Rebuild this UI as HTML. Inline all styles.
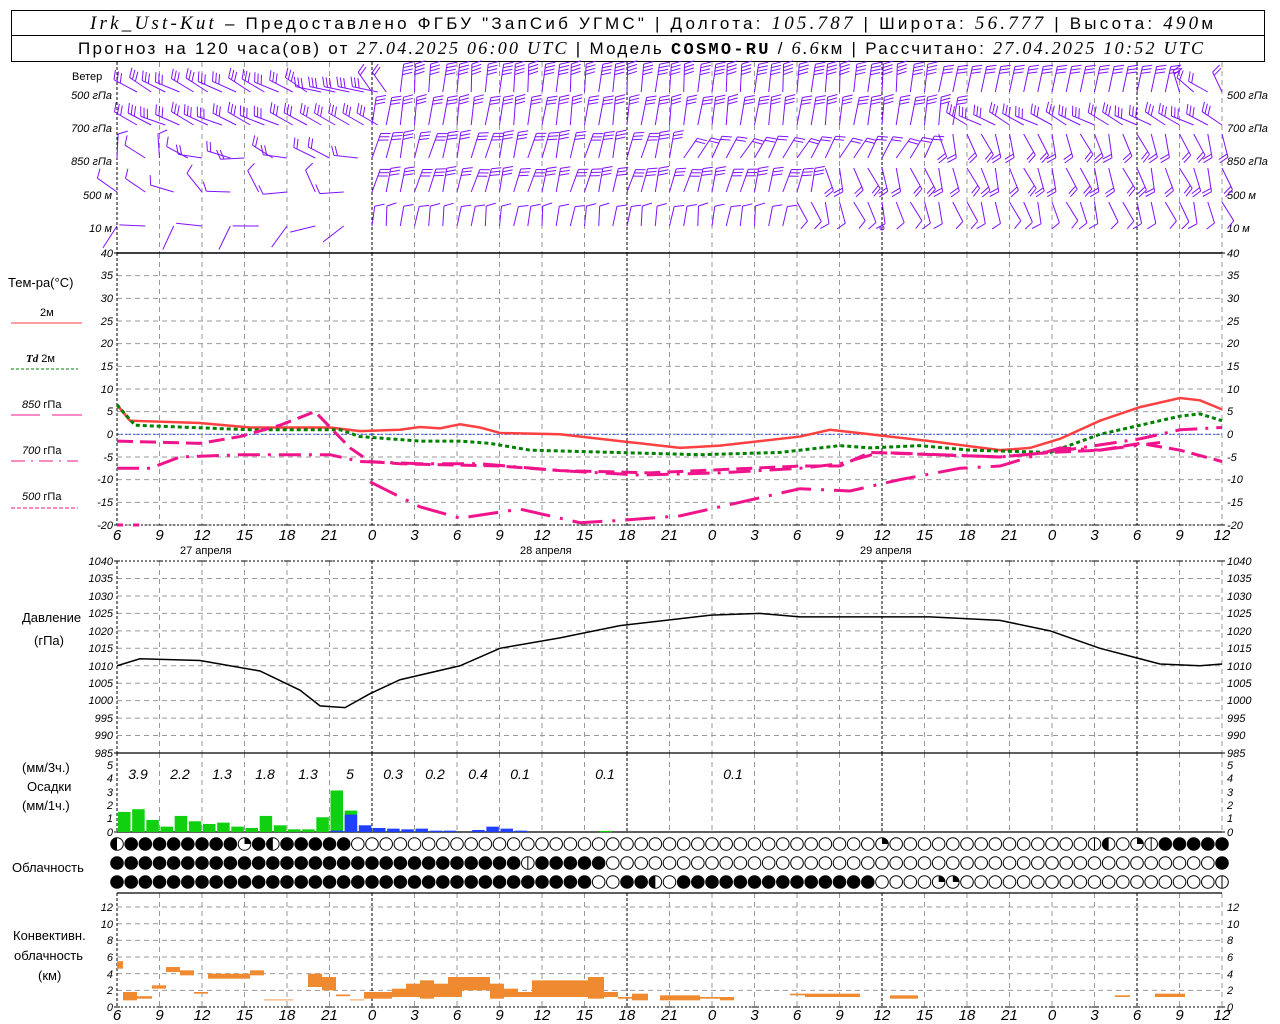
<!DOCTYPE html>
<html><head><meta charset="utf-8">
<style>
html,body{margin:0;padding:0;background:#fff;}
body{width:1280px;height:1024px;overflow:hidden;position:relative;font-family:"Liberation Sans","DejaVu Sans",sans-serif;}
svg{position:absolute;left:0;top:0;}
.t{font-family:"Liberation Sans",sans-serif;font-style:italic;font-size:11px;fill:#000;}
.h{font-family:"Liberation Sans",sans-serif;font-style:italic;font-size:15px;fill:#000;text-anchor:middle;}
.l{font-family:"Liberation Sans",sans-serif;font-size:13px;fill:#000;}
.s{font-family:"Liberation Sans",sans-serif;font-size:11px;fill:#000;}
.hd{font-family:"Liberation Sans",sans-serif;font-size:17px;fill:#000;}
.it{font-family:"Liberation Serif",serif;font-style:italic;}
.pv{font-family:"Liberation Sans",sans-serif;font-style:italic;font-size:14px;fill:#000;text-anchor:middle;}
</style></head><body>
<svg id="g" width="1280" height="1024" xmlns="http://www.w3.org/2000/svg">
<rect x="11.5" y="10.5" width="1253" height="25" fill="none" stroke="#000"/>
<rect x="11.5" y="35.5" width="1253" height="26" fill="none" stroke="#000"/>
<text class="hd" x="90" y="29" textLength="1123" lengthAdjust="spacing"><tspan class="it" font-size="19">Irk_Ust-Kut</tspan> – Предоставлено ФГБУ "ЗапСиб УГМС" | Долгота: <tspan class="it" font-size="19">105.787</tspan> | Широта: <tspan class="it" font-size="19">56.777</tspan> | Высота: <tspan class="it" font-size="19">490</tspan>м</text>
<text class="hd" x="78" y="54" font-size="16" textLength="1125" lengthAdjust="spacing">Прогноз на 120 часа(ов) от <tspan class="it" font-size="18">27.04.2025 06:00 UTC</tspan>  | Модель <tspan font-family="Liberation Mono" font-weight="bold">COSMO-RU</tspan> / <tspan class="it" font-size="18">6.6</tspan>км | Рассчитано: <tspan class="it" font-size="18">27.04.2025 10:52 UTC</tspan></text>

<g class="l">
<text x="72" y="80" class="s" font-size="12">Ветер</text>
<text x="8" y="287">Тем-ра(°C)</text>
<text x="40" y="316" class="s">2м</text>
<text x="26" y="362" class="s"><tspan class="it" font-weight="bold">Td</tspan>  2м</text>
<text x="22" y="408" class="s"><tspan font-style="italic">850</tspan> гПа</text>
<text x="22" y="454" class="s"><tspan font-style="italic">700</tspan> гПа</text>
<text x="22" y="500" class="s"><tspan font-style="italic">500</tspan> гПа</text>
<text x="22" y="622">Давление</text>
<text x="34" y="645">(гПа)</text>
<text x="22" y="772">(мм/3ч.)</text>
<text x="27" y="791">Осадки</text>
<text x="22" y="810">(мм/1ч.)</text>
<text x="12" y="872">Облачность</text>
<text x="13" y="940">Конвективн.</text>
<text x="14" y="960">облачность</text>
<text x="38" y="980">(км)</text>
</g>
<g class="t" text-anchor="end">
<text x="112" y="99">500 гПа</text><text x="112" y="132">700 гПа</text><text x="112" y="165">850 гПа</text><text x="112" y="199">500 м</text><text x="112" y="232">10  м</text>
</g>
<g class="t">
<text x="1227" y="99">500 гПа</text><text x="1227" y="132">700 гПа</text><text x="1227" y="165">850 гПа</text><text x="1227" y="199">500 м</text><text x="1227" y="232">10  м</text>
</g>
<g class="t" font-size="10" text-anchor="end">
<text x="113" y="257">40</text><text x="113" y="279">35</text><text x="113" y="302">30</text><text x="113" y="325">25</text><text x="113" y="347">20</text><text x="113" y="370">15</text><text x="113" y="393">10</text><text x="113" y="415">5</text><text x="113" y="438">0</text><text x="113" y="461">-5</text><text x="113" y="483">-10</text><text x="113" y="506">-15</text><text x="113" y="529">-20</text>
<text x="113" y="565">1040</text><text x="113" y="582">1035</text><text x="113" y="600">1030</text><text x="113" y="617">1025</text><text x="113" y="635">1020</text><text x="113" y="652">1015</text><text x="113" y="670">1010</text><text x="113" y="687">1005</text><text x="113" y="704">1000</text><text x="113" y="722">995</text><text x="113" y="739">990</text><text x="113" y="757">985</text>
<text x="113" y="769">5</text><text x="113" y="782">4</text><text x="113" y="796">3</text><text x="113" y="809">2</text><text x="113" y="822">1</text><text x="113" y="836">0</text>
<text x="113" y="911">12</text><text x="113" y="928">10</text><text x="113" y="944">8</text><text x="113" y="961">6</text><text x="113" y="978">4</text><text x="113" y="994">2</text><text x="113" y="1011">0</text>
</g>
<g class="t" font-size="10">
<text x="1227" y="257">40</text><text x="1227" y="279">35</text><text x="1227" y="302">30</text><text x="1227" y="325">25</text><text x="1227" y="347">20</text><text x="1227" y="370">15</text><text x="1227" y="393">10</text><text x="1227" y="415">5</text><text x="1227" y="438">0</text><text x="1227" y="461">-5</text><text x="1227" y="483">-10</text><text x="1227" y="506">-15</text><text x="1227" y="529">-20</text>
<text x="1227" y="565">1040</text><text x="1227" y="582">1035</text><text x="1227" y="600">1030</text><text x="1227" y="617">1025</text><text x="1227" y="635">1020</text><text x="1227" y="652">1015</text><text x="1227" y="670">1010</text><text x="1227" y="687">1005</text><text x="1227" y="704">1000</text><text x="1227" y="722">995</text><text x="1227" y="739">990</text><text x="1227" y="757">985</text>
<text x="1227" y="769">5</text><text x="1227" y="782">4</text><text x="1227" y="796">3</text><text x="1227" y="809">2</text><text x="1227" y="822">1</text><text x="1227" y="836">0</text>
<text x="1227" y="911">12</text><text x="1227" y="928">10</text><text x="1227" y="944">8</text><text x="1227" y="961">6</text><text x="1227" y="978">4</text><text x="1227" y="994">2</text><text x="1227" y="1011">0</text>
</g>
<g class="h">
<text x="117" y="540">6</text><text x="159.5" y="540">9</text><text x="202" y="540">12</text><text x="244.5" y="540">15</text><text x="287" y="540">18</text><text x="329.5" y="540">21</text><text x="372" y="540">0</text><text x="414.5" y="540">3</text><text x="457" y="540">6</text><text x="499.5" y="540">9</text><text x="542" y="540">12</text><text x="584.5" y="540">15</text><text x="627" y="540">18</text><text x="669.5" y="540">21</text><text x="712" y="540">0</text><text x="754.5" y="540">3</text><text x="797" y="540">6</text><text x="839.5" y="540">9</text><text x="882" y="540">12</text><text x="924.5" y="540">15</text><text x="967" y="540">18</text><text x="1009.5" y="540">21</text><text x="1052" y="540">0</text><text x="1094.5" y="540">3</text><text x="1137" y="540">6</text><text x="1179.5" y="540">9</text><text x="1222" y="540">12</text>
</g>
<g class="h">
<text x="117" y="1020">6</text><text x="159.5" y="1020">9</text><text x="202" y="1020">12</text><text x="244.5" y="1020">15</text><text x="287" y="1020">18</text><text x="329.5" y="1020">21</text><text x="372" y="1020">0</text><text x="414.5" y="1020">3</text><text x="457" y="1020">6</text><text x="499.5" y="1020">9</text><text x="542" y="1020">12</text><text x="584.5" y="1020">15</text><text x="627" y="1020">18</text><text x="669.5" y="1020">21</text><text x="712" y="1020">0</text><text x="754.5" y="1020">3</text><text x="797" y="1020">6</text><text x="839.5" y="1020">9</text><text x="882" y="1020">12</text><text x="924.5" y="1020">15</text><text x="967" y="1020">18</text><text x="1009.5" y="1020">21</text><text x="1052" y="1020">0</text><text x="1094.5" y="1020">3</text><text x="1137" y="1020">6</text><text x="1179.5" y="1020">9</text><text x="1222" y="1020">12</text>
</g>
<g class="s" font-size="13">
<text x="180" y="554">27 апреля</text><text x="520" y="554">28 апреля</text><text x="860" y="554">29 апреля</text>
</g>
<g class="pv">
<text x="138" y="779">3.9</text><text x="180" y="779">2.2</text><text x="222" y="779">1.3</text><text x="265" y="779">1.8</text><text x="308" y="779">1.3</text><text x="350" y="779">5</text><text x="393" y="779">0.3</text><text x="435" y="779">0.2</text><text x="478" y="779">0.4</text><text x="520" y="779">0.1</text><text x="605" y="779">0.1</text><text x="733" y="779">0.1</text>
</g>
<line x1="11" y1="323" x2="82" y2="323" stroke="#ff4040" stroke-width="1"/>
<line x1="11" y1="369" x2="78" y2="369" stroke="#008000" stroke-dasharray="3,2"/>
<line x1="11" y1="415" x2="40" y2="415" stroke="#f0148c"/><line x1="52" y1="415" x2="82" y2="415" stroke="#f0148c"/>
<line x1="11" y1="461" x2="78" y2="461" stroke="#f0148c" stroke-dasharray="14,6,2,6"/>
<line x1="11" y1="508" x2="78" y2="508" stroke="#f0148c" stroke-dasharray="4,2"/>
<g id="dyn"></g>
</svg>
<script>
(function(){
var NS='http://www.w3.org/2000/svg',D=document.getElementById('dyn');
function el(n,a){var e=document.createElementNS(NS,n);for(var k in a)e.setAttribute(k,a[k]);D.appendChild(e);return e;}
function ln(x1,y1,x2,y2,c,w,da){var a={x1:x1,y1:y1,x2:x2,y2:y2,stroke:c,'stroke-width':w||1};if(da)a['stroke-dasharray']=da;return el('line',a);}
function X(i){return 117+i*14.1667;}
for(var t=35;t>=-20;t-=5){var y=253+(40-t)*4.533;ln(117,y,1222,y,'#999',1,'5,4');}
ln(117,434.3,1222,434.3,'#3050ff',1,'2,2');
for(var p=1035;p>985;p-=5){var y=753-(p-985)*3.49;ln(117,y,1222,y,'#999',1,'5,4');}
ln(117,561,1222,561,'#000',1,'2,2');
for(var c=2;c<=12;c+=2){var y=1007-c*8.33;ln(117,y,1222,y,'#999',1,'5,4');}
var secs=[[62,253],[253,525],[561,753],[753,832],[893,1007]];
for(var k=0;k<=26;k++){var x=117+42.5*k;var day=(k%6==0);
 secs.forEach(function(s){ln(x,s[0],x,s[1],day?'#000':'#999',1,day?'3,2':'5,4');});
 [253,525,561,753,832,1007].forEach(function(y){ln(x-3,y,x+3,y,'#000',1);});
}
ln(117,253,1222,253,'#000',1.5);ln(117,525,1222,525,'#000',1,'2,2');
ln(117,753,1222,753,'#000',1.2);ln(117,832,1222,832,'#000',1.2);ln(117,893,1222,893,'#000',1.2);
ln(117,1007,1222,1007,'#000',1,'2,2');
function pl(pts,col,w,da,fy){var s=pts.map(function(q){return q[0]+','+fy(q[1]);}).join(' ');var a={points:s,fill:'none',stroke:col,'stroke-width':w};if(da)a['stroke-dasharray']=da;el('polyline',a);}
function ty(t){return 434.3-t*4.533;}
pl([[117,6.5],[130,3],[200,2.5],[250,1.5],[330,1.5],[360,0.7],[400,1],[420,1.6],[440,1.3],[460,2.2],[480,1.5],[500,0.3],[560,0],[620,-1.5],[680,-3],[720,-2.5],[800,-0.5],[830,1],[870,0],[930,-1.5],[1000,-3.5],[1030,-3],[1060,-1],[1100,3],[1140,6],[1180,8],[1200,7.5],[1222,5.5]],'#ff4040',2.5,null,ty);
pl([[117,6.5],[135,2],[250,1],[340,1],[360,-0.5],[420,-1.5],[460,-1.5],[490,-2],[530,-3.5],[700,-4.5],[780,-4],[840,-2.5],[870,-3],[920,-2.5],[970,-3.5],[1050,-4],[1100,0],[1140,2],[1180,4],[1200,4.5],[1222,3]],'#008000',3,'4,3',ty);
pl([[117,-1.5],[200,-2],[240,-0.5],[280,2],[315,5],[350,-3],[370,-6],[400,-6.5],[500,-7],[560,-8],[650,-8.5],[700,-8],[800,-7],[840,-7],[870,-4],[1000,-5],[1050,-4],[1100,-3.5],[1140,-2],[1180,-3.5],[1222,-6]],'#f0148c',3,'16,7',ty);
pl([[117,-7.5],[150,-7.5],[180,-5],[240,-4.5],[330,-4.5],[360,-6],[420,-6.5],[480,-6.5],[560,-8],[640,-9],[720,-8.5],[800,-7.5],[840,-6.5],[880,-4],[1000,-5],[1050,-4],[1140,-1],[1180,1],[1222,1.5]],'#f0148c',3,'22,8,3,8',ty);
pl([[117,-20],[145,-20]],'#f0148c',3,'6,10',ty);
pl([[370,-10.5],[420,-16],[460,-18.5],[520,-16.5],[580,-19.5],[620,-19],[680,-18],[740,-15],[800,-12],[850,-12.5],[900,-10],[960,-7.5],[1000,-7],[1060,-3],[1100,-3.5],[1160,-1.8]],'#f0148c',3,'30,10,3,10',ty);
pl([[117,1010],[140,1012],[200,1011.5],[260,1008.5],[300,1003],[320,998.5],[345,998],[370,1002],[400,1006],[460,1010],[500,1015],[560,1018],[620,1021.5],[711,1024.5],[760,1025],[800,1024],[930,1024],[1000,1023],[1050,1020],[1100,1015],[1160,1010.5],[1200,1010],[1222,1010.5]],'#000',1.5,null,function(p){return 753-(p-985)*3.49;});
var pg=[1.5,1.7,0.9,0.4,1.2,0.8,0.6,0.7,0.4,0.3,1.2,0.5,0.2,0.2,1.1,3.1,1.6];
var pb=[0,0,0,0,0,0,0,0,0,0,0,0,0,0,0,0.1,1.3,0.5,0.3,0.25,0.2,0.25,0.1,0.1,0,0.15,0.4,0.25,0.1];
function py(v){return 832-v*13.4;}
pg.forEach(function(v,i){el('rect',{x:X(i)+1,y:py(v),width:12.5,height:v*13.4,fill:'#10d010'});});
pb.forEach(function(v,i){if(v>0)el('rect',{x:X(i)+1,y:py(v),width:12.5,height:v*13.4,fill:'#2040ff'});});
el('rect',{x:X(34)+1,y:py(0.08),width:12.5,height:1.2,fill:'#10d010'});
var cv=[[117,123,4.6,5.5],[123,137,0.8,1.8],[137,152,1,1.3],[152,166,2.2,2.6],[166,180,4.2,4.8],[180,194,3.8,4.4],[194,208,1.6,1.8],[208,222,3.4,4],[222,250,3.4,4],[250,264,3.8,4.4],[264,293,0.8,0.9],[308,322,2.4,4],[322,336,2,3.6],[336,350,1.3,1.5],[350,364,0.8,0.9],[364,378,1,1.8],[378,392,1,1.8],[392,406,1.2,2.2],[406,420,1.2,2.8],[420,434,1,3.2],[434,448,1.2,2.8],[448,462,1.2,3.6],[462,490,2,3.6],[490,504,1,2.8],[504,518,1.2,2.2],[518,532,1.2,1.8],[532,588,1.2,3.2],[588,604,1,3.6],[604,618,1.2,1.8],[618,632,1,1.2],[632,648,0.8,1.6],[660,700,0.8,1.4],[700,720,1,1.2],[720,734,0.8,1.2],[790,805,1.4,1.6],[805,860,1.2,1.6],[890,918,1,1.4],[1115,1130,1.2,1.4],[1155,1185,1.2,1.6]];
cv.forEach(function(b){el('rect',{x:b[0],y:1007-b[3]*8.33,width:b[1]-b[0],height:(b[3]-b[2])*8.33,fill:'#f08a30'});});
function row(s){var r=[];for(var i=0;i<79;i++)r.push('E');s.forEach(function(q){for(var i=q[0];i<=q[1];i++)r[i]=q[2];});return r;}
var R1=row([[0,0,'H'],[1,16,'F'],[9,9,'Q'],[11,11,'H'],[54,54,'Q'],[69,69,'V'],[70,70,'H'],[72,72,'Q'],[73,73,'V'],[74,78,'F']]);
var R2=row([[0,34,'F'],[29,29,'V'],[78,78,'F']]);
var R3=row([[0,33,'F'],[36,38,'F'],[38,38,'H'],[40,53,'F'],[58,59,'Q'],[78,78,'V']]);
[[R1,844],[R2,863],[R3,882]].forEach(function(rr){var y=rr[1];rr[0].forEach(function(c,i){var x=X(i);
 el('circle',{cx:x,cy:y,r:6.3,fill:c=='F'?'#000':'#fff',stroke:'#000','stroke-width':1});
 if(c=='H'){el('path',{d:'M'+x+','+(y-6.3)+' A6.3,6.3 0 0,0 '+x+','+(y+6.3)+' Z',fill:'#000'});}
 if(c=='Q'){el('path',{d:'M'+x+','+y+' L'+x+','+(y-6.3)+' A6.3,6.3 0 0,1 '+(x+6.3)+','+y+' Z',fill:'#000'});}
 if(c=='V'){ln(x,y-6.3,x,y+6.3,'#000',1);}
});});
var bases=[92,125,158,192,226];
function prm(L,i){var j=Math.sin(i*1.7+L)*6;
 if(L==0){if(i<13)return[-62+j,3,26];if(i<18)return[-78,3,26];if(i<20)return[-35,2,24];if(i<58)return[5+j*0.6,4,28];if(i<75)return[12,3,26];return[-40+j*4,2,22];}
 if(L==1){if(i<13)return[-65+j,3,26];if(i<18)return[-60,3,24];if(i<60)return[8+j*0.6,3,28];return[-62+j,3,24];}
 if(L==2){if(i<6)return[-30+j*6,1,24];if(i<18)return[-75+j*3,2,24];if(i<40)return[14+j,3,26];if(i<58)return[30+j,2,24];return[160+j*2,2,24];}
 if(L==3){if(i<18)return[-60+j*6,1,24];if(i<50)return[15+j,3,24];return[160+j*2,2,24];}
 if(i<18)return[-120+j*6,0,26];if(i<48)return[8+j,1,20];return[160+j*2,1,22];}
for(var L=0;L<5;L++){for(var i=0;i<79;i++){if((L==4&&i%2==1&&i<18)||(L==2&&i<18&&i%3==1)||(L==3&&i<18&&i%2==1))continue;
 var q=prm(L,i),a=q[0]*Math.PI/180,n=q[1],len=q[2];var x=X(i)+(L<2&&i<18?20:0),y=bases[L];
 if(q[0]>90){y-=24;}
 var dx=Math.sin(a),dy=-Math.cos(a);var ex=x+dx*len,ey=y+dy*len;
 ln(x.toFixed(1),y,ex.toFixed(1),ey.toFixed(1),'#8010ff',1);
 var ta=a+70*Math.PI/180,tx=Math.sin(ta)*10,tyy=-Math.cos(ta)*10;
 for(var k=0;k<n;k++){var sx=ex-dx*k*3.5,sy=ey-dy*k*3.5;ln(sx.toFixed(1),sy.toFixed(1),(sx+tx).toFixed(1),(sy+tyy).toFixed(1),'#8010ff',1);}
}}
el('circle',{cx:882,cy:228,r:2,fill:'none',stroke:'#8010ff'});
})();
</script>
</body></html>
